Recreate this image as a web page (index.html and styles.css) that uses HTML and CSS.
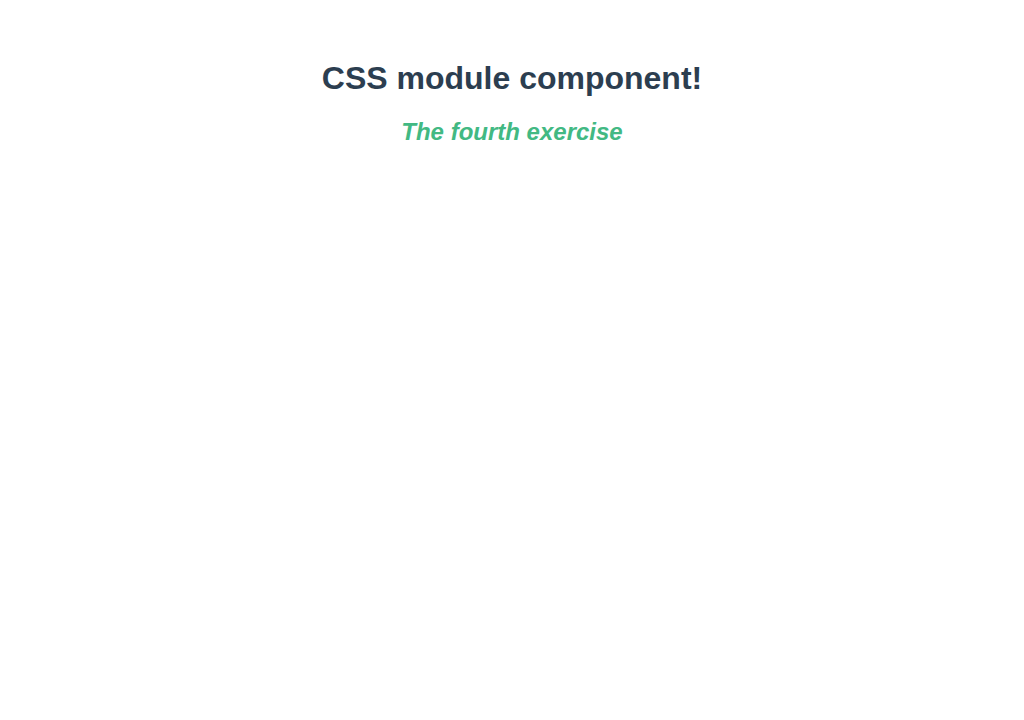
FILE: index.html
```html
<!DOCTYPE html>
<html>
<head>
<meta charset="utf-8">
<link rel="stylesheet" href="styles.css">
</head>
<body>
<div class="app">
  <h1 class="title">CSS module component!</h1>
  <h2 class="subtitle">The fourth exercise</h2>
</div>
</body>
</html>
```

FILE: styles.css
```css
body {
  margin: 8px;
  background: #fff;
}
.app {
  font-family: "Liberation Sans", Arial, Helvetica, sans-serif;
  text-align: center;
  color: #2c3e50;
  margin-top: 52px;
}
.title {
  font-size: 32px;
  font-weight: bold;
  margin: 21.44px 0;
}
.subtitle {
  font-size: 24px;
  font-weight: bold;
  font-style: italic;
  color: #42b983;
  margin: 19.92px 0;
}
```
